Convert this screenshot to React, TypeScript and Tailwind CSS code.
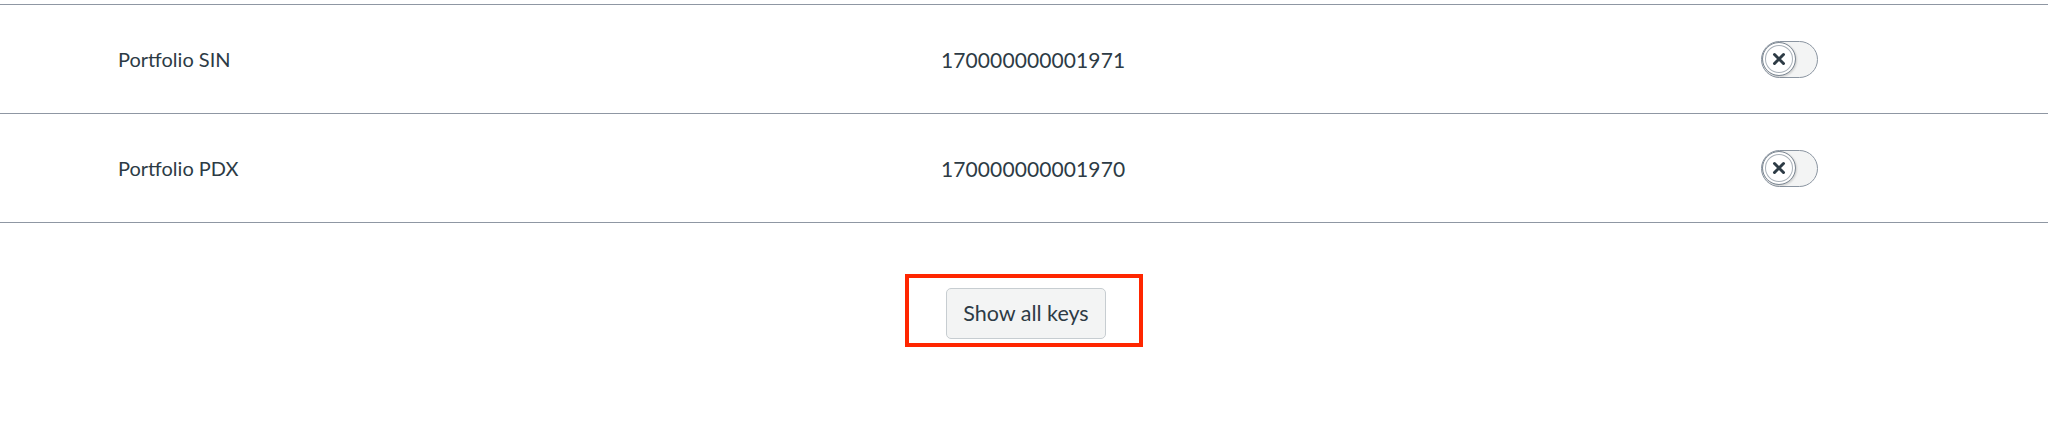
import React from "react";

const rows = [
  { name: "Portfolio SIN", key: "170000000001971" },
  { name: "Portfolio PDX", key: "170000000001970" },
];

function Toggle() {
  return (
    <div className="relative w-[57px] h-[37px] rounded-full border-[1.5px] border-[#8b95a1] bg-[#f3f4f4]">
      <div className="absolute left-[0px] top-[0px] w-[34px] h-[34px] rounded-full bg-white border-[1.5px] border-[#7c8792] shadow-[inset_0_0_0_2px_#ffffff,inset_0_0_0_3px_#a9b1b9,1px_1px_2px_rgba(0,0,0,0.15)] flex items-center justify-center">
        <svg width="14" height="14" viewBox="0 0 14 14">
          <path d="M2.5 2.5 L11.5 11.5 M11.5 2.5 L2.5 11.5" stroke="#2d3b45" strokeWidth="3" strokeLinecap="round" />
        </svg>
      </div>
    </div>
  );
}

export default function App() {
  return (
    <div className="w-[2048px] h-[438px] bg-white text-[#2d3b45]" style={{ fontFamily: "Lato, 'Open Sans', sans-serif" }}>
      <div className="pt-[4px]">
        <div className="border-t-[1.5px] border-[#8f97a3]">
          {rows.map((r) => (
            <div
              key={r.key}
              className="grid grid-cols-[823px_820px_1fr] items-center pl-[118px] h-[109px] border-b-[1.5px] border-[#8f97a3]"
            >
              <div className="text-[20px] leading-none">{r.name}</div>
              <div className="text-[21px] leading-none tracking-[0.1px]">{r.key}</div>
              <div>
                <Toggle />
              </div>
            </div>
          ))}
        </div>
      </div>
      <div className="flex justify-center pt-[51px]">
        <div className="border-[4px] border-[#ff2600] pt-[10px] pb-[4px] pl-[37px] pr-[33px]">
          <button className="w-[160px] h-[51px] rounded-[5px] border border-[#c7cdd1] bg-[#f3f4f4] text-[21.5px] text-[#2d3b45] flex items-center justify-center">
            Show all keys
          </button>
        </div>
      </div>
    </div>
  );
}
